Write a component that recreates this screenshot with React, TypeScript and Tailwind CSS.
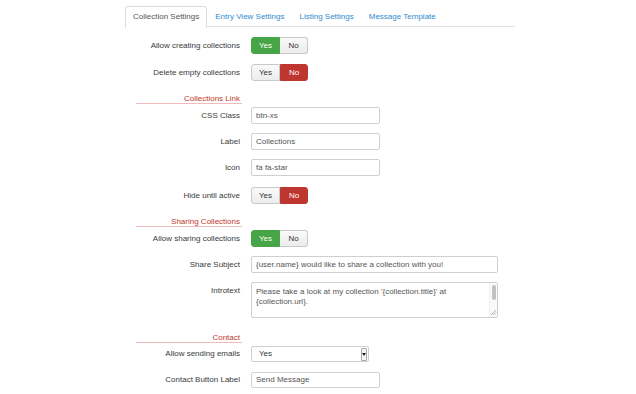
const TABS = ['Collection Settings', 'Entry View Settings', 'Listing Settings', 'Message Template'];

function Label({ text, top = false }: { text: string; top?: boolean }) {
  return (
    <div
      className={`w-[115px] shrink-0 text-right text-[#3a3a3a] ${top ? 'self-start pt-[5px]' : 'self-center'}`}
    >
      {text}
    </div>
  );
}

function Row({ label, mt, h, children, top }: { label: string; mt: string; h: string; children: React.ReactNode; top?: boolean }) {
  return (
    <div className={`flex ${mt} ${h}`}>
      <Label text={label} top={top} />
      <div className="ml-[11px] flex h-full">{children}</div>
    </div>
  );
}

function Toggle({ value }: { value: 'yes' | 'no' }) {
  const off = 'bg-gradient-to-b from-[#fafafa] to-[#ececec] text-[#333] border-[#c8c8c8]';
  return (
    <div className="flex h-full text-[8px]">
      <div
        className={`w-[29px] flex items-center justify-center rounded-l-[3px] border ${
          value === 'yes' ? 'bg-[#46a546] border-[#46a546] text-white' : off
        }`}
      >
        Yes
      </div>
      <div
        className={`w-[28px] flex items-center justify-center rounded-r-[3px] border ${
          value === 'no' ? 'bg-[#bd362f] border-[#bd362f] text-white' : off + ' border-l-0'
        }`}
      >
        No
      </div>
    </div>
  );
}

function Input({ value, w }: { value: string; w: string }) {
  return (
    <div className={`${w} h-full border border-[#cfcfcf] rounded-[2px] px-[4px] flex items-center text-[#555] bg-white`}>
      {value}
    </div>
  );
}

function Section({ title, mt }: { title: string; mt: string }) {
  return (
    <div className={`${mt} ml-[11px] w-[106px] h-[11px] border-b border-[#f0bcbc] text-right pr-[2px] text-[#c0392b] leading-[12px]`}>
      {title}
    </div>
  );
}

export default function App() {
  return (
    <div
      className="w-[636px] h-[394px] bg-white overflow-hidden text-[8px] leading-none"
      style={{ fontFamily: '"Liberation Sans", Arial, sans-serif' }}
    >
      <div className="ml-[125px] w-[390px] flex flex-col">
        <div className="mt-[6px] flex gap-[1px] border-b border-[#e2e2e2] h-[21px]">
          {TABS.map((t, i) => (
            <div
              key={t}
              className={`px-[7px] flex items-center h-[21px] ${
                i === 0
                  ? 'border border-[#dcdcdc] border-b-white bg-white rounded-t-[3px] text-[#555] mb-[-1px] h-[22px]'
                  : 'text-[#2f8bd0]'
              }`}
            >
              {t}
            </div>
          ))}
        </div>

        <Row label="Allow creating collections" mt="mt-[10px]" h="h-[17px]">
          <Toggle value="yes" />
        </Row>
        <Row label="Delete empty collections" mt="mt-[10px]" h="h-[17px]">
          <Toggle value="no" />
        </Row>

        <Section title="Collections Link" mt="mt-[12px]" />
        <Row label="CSS Class" mt="mt-[3px]" h="h-[17px]">
          <Input value="btn-xs" w="w-[129px]" />
        </Row>
        <Row label="Label" mt="mt-[9px]" h="h-[17px]">
          <Input value="Collections" w="w-[129px]" />
        </Row>
        <Row label="Icon" mt="mt-[9px]" h="h-[17px]">
          <Input value="fa fa-star" w="w-[129px]" />
        </Row>
        <Row label="Hide until active" mt="mt-[11px]" h="h-[17px]">
          <Toggle value="no" />
        </Row>

        <Section title="Sharing Collections" mt="mt-[12px]" />
        <Row label="Allow sharing collections" mt="mt-[3px]" h="h-[17px]">
          <Toggle value="yes" />
        </Row>
        <Row label="Share Subject" mt="mt-[9px]" h="h-[17px]">
          <Input value="{user.name} would like to share a collection with you!" w="w-[247px]" />
        </Row>
        <Row label="Introtext" mt="mt-[9px]" h="h-[36px]" top>
          <div className="w-[247px] h-full border border-[#cfcfcf] rounded-[2px] flex text-[#555] bg-white">
            <div className="flex-1 px-[4px] pt-[4px] leading-[10px]">
              Please take a look at my collection '{'{collection.title}'}' at
              <br />
              {'{collection.url}'}.
            </div>
            <div className="w-[8px] flex flex-col border-l border-[#eee] bg-[#fafafa]">
              <div className="mt-[2px] mx-[1.5px] h-[15px] rounded-full bg-[#c1c1c1]" />
              <div className="flex-1" />
              <svg width="7" height="7" viewBox="0 0 7 7" className="mb-[1px]">
                <path d="M1 6L6 1M3.5 6L6 3.5" stroke="#999" strokeWidth="0.8" />
              </svg>
            </div>
          </div>
        </Row>

        <Section title="Contact" mt="mt-[14px]" />
        <Row label="Allow sending emails" mt="mt-[3px]" h="h-[16px]">
          <div className="w-[118px] h-full border border-[#cfcfcf] rounded-[2px] flex items-center bg-white text-[#333]">
            <div className="flex-1 pl-[7px]">Yes</div>
            <div className="w-[6px] h-[13px] mr-[1px] border border-[#aaa] rounded-[1px] flex items-center justify-center bg-[#f4f4f4]">
              <svg width="4" height="3" viewBox="0 0 4 3">
                <path d="M0 0h4L2 3z" fill="#222" />
              </svg>
            </div>
          </div>
        </Row>
        <Row label="Contact Button Label" mt="mt-[10px]" h="h-[16px]">
          <Input value="Send Message" w="w-[129px]" />
        </Row>
      </div>
    </div>
  );
}
